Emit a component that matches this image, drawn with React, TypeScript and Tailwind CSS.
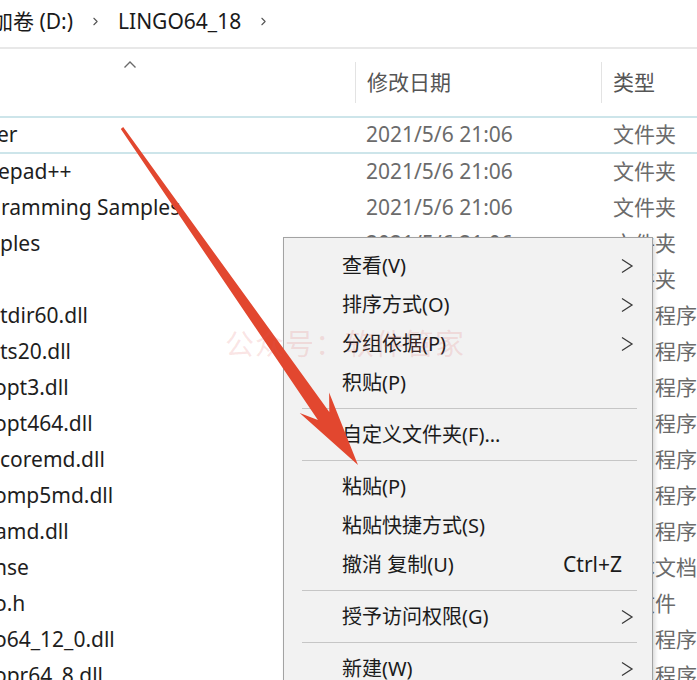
import { ChevronRight } from "lucide-react";

type Row = { name: string; shift: string; type: string };

const rows: Row[] = [
  { name: "er", shift: "-ml-[3px]", type: "文件夹" },
  { name: "epad++", shift: "-ml-[2px]", type: "文件夹" },
  { name: "ramming Samples", shift: "ml-[1px]", type: "文件夹" },
  { name: "ples", shift: "ml-0", type: "文件夹" },
  { name: "", shift: "ml-0", type: "文件夹" },
  { name: "tdir60.dll", shift: "ml-0", type: "应用程序扩展" },
  { name: "ts20.dll", shift: "ml-0", type: "应用程序扩展" },
  { name: "opt3.dll", shift: "-ml-[6px]", type: "应用程序扩展" },
  { name: "opt464.dll", shift: "-ml-[6px]", type: "应用程序扩展" },
  { name: "coremd.dll", shift: "ml-0", type: "应用程序扩展" },
  { name: "omp5md.dll", shift: "-ml-[6px]", type: "应用程序扩展" },
  { name: "amd.dll", shift: "-ml-[5px]", type: "应用程序扩展" },
  { name: "nse", shift: "-ml-[6px]", type: "文本文档" },
  { name: "o.h", shift: "-ml-[6px]", type: "H 文件" },
  { name: "o64_12_0.dll", shift: "-ml-[6px]", type: "应用程序扩展" },
  { name: "opr64_8.dll", shift: "-ml-[6px]", type: "应用程序扩展" },
];

type MenuEntry =
  | { kind: "item"; label: string; sub?: boolean; hint?: string }
  | { kind: "sep" };

const menu: MenuEntry[] = [
  { kind: "item", label: "查看(V)", sub: true },
  { kind: "item", label: "排序方式(O)", sub: true },
  { kind: "item", label: "分组依据(P)", sub: true },
  { kind: "item", label: "积贴(P)" },
  { kind: "sep" },
  { kind: "item", label: "自定义文件夹(F)..." },
  { kind: "sep" },
  { kind: "item", label: "粘贴(P)" },
  { kind: "item", label: "粘贴快捷方式(S)" },
  { kind: "item", label: "撤消 复制(U)", hint: "Ctrl+Z" },
  { kind: "sep" },
  { kind: "item", label: "授予访问权限(G)", sub: true },
  { kind: "sep" },
  { kind: "item", label: "新建(W)", sub: true },
  { kind: "sep" },
  { kind: "item", label: "属性(R)" },
];

function SubArrow() {
  return (
    <svg width="14" height="16" viewBox="0 0 14 16" className="shrink-0">
      <polyline points="2,1.5 12,8 2,14.5" fill="none" stroke="#3a3a3a" strokeWidth="1.3" />
    </svg>
  );
}

function ContextMenu() {
  return (
    <div className="absolute left-[283px] top-[237px] w-[370px] border border-[#a3a3a3] bg-[#f2f2f2] pt-[8px] shadow-[2px_2px_4px_rgba(0,0,0,0.15)]">
      {menu.map((entry, i) =>
        entry.kind === "sep" ? (
          <div key={i} className="flex h-[13px] items-center pl-[18px] pr-[15px]">
            <div className="h-px w-full bg-[#c6c6c6]" />
          </div>
        ) : (
          <div key={i} className="flex h-[39px] items-center justify-between pl-[58px] pr-[18px] text-[20px] text-[#1b1b1b]">
            <span>{entry.label}</span>
            {entry.sub && <SubArrow />}
            {entry.hint && <span className="pr-[12px] text-[21px]">{entry.hint}</span>}
          </div>
        )
      )}
    </div>
  );
}

function Arrow() {
  return (
    <svg className="pointer-events-none absolute left-0 top-0" width="697" height="680" viewBox="0 0 697 680">
      <polygon
        points="123.2,127.1 329.3,411.9 329.1,392.5 358,465 299.7,413.1 317.9,419.9 120.8,128.9"
        fill="#e2472f"
      />
    </svg>
  );
}

export default function App() {
  return (
    <div
      className="relative h-[680px] w-[697px] overflow-hidden bg-white"
      style={{ fontFamily: '"Noto Sans", "Noto Sans CJK SC", sans-serif' }}
    >
      {/* address bar */}
      <div className="flex h-[49px] items-center border-b-2 border-[#e8e8e8] pb-[4px] text-[21px] text-[#1a1a1a]">
        <span className="-ml-[29px] whitespace-nowrap">新加卷 (D:)</span>
        <ChevronRight size={13} strokeWidth={2} className="ml-[16px] text-[#555]" />
        <span className="ml-[16px]">LINGO64_18</span>
        <ChevronRight size={13} strokeWidth={2} className="ml-[16px] text-[#555]" />
      </div>

      {/* column header */}
      <div className="grid h-[69px] grid-cols-[355px_246px_1fr] border-b-2 border-[#cde5ea] text-[21px] text-[#555]">
        <div className="pl-[123px] pt-[11px]">
          <svg width="14" height="9" viewBox="0 0 14 9">
            <polyline points="1.5,7.5 7,2 12.5,7.5" fill="none" stroke="#6a6a6a" strokeWidth="1.4" />
          </svg>
        </div>
        <div className="my-[13px] flex items-center border-l border-[#e3e3e3] pl-[11px]">修改日期</div>
        <div className="my-[13px] flex items-center border-l border-[#e3e3e3] pl-[11px]">类型</div>
      </div>

      {/* file list */}
      <div>
        {rows.map((r, i) => (
          <div
            key={i}
            className={`grid h-[36px] grid-cols-[355px_246px_1fr] items-center whitespace-nowrap ${
              i === 0 ? "border-b-2 border-[#cde5ea]" : ""
            }`}
          >
            <span className={`text-[21px] text-[#1e1e1e] ${r.shift}`}>{r.name}</span>
            <span className="pl-[11px] text-[21px] text-[#6b6b6b]">2021/5/6 21:06</span>
            <span className="pl-[12px] text-[21px] text-[#6b6b6b]">{r.type}</span>
          </div>
        ))}
      </div>

      <ContextMenu />
      <Arrow />

      <div className="pointer-events-none absolute left-[225px] top-[322px] whitespace-nowrap text-[29px] tracking-[1px] text-[rgba(225,90,90,0.16)]">
        公众号：软件管家
      </div>
    </div>
  );
}
